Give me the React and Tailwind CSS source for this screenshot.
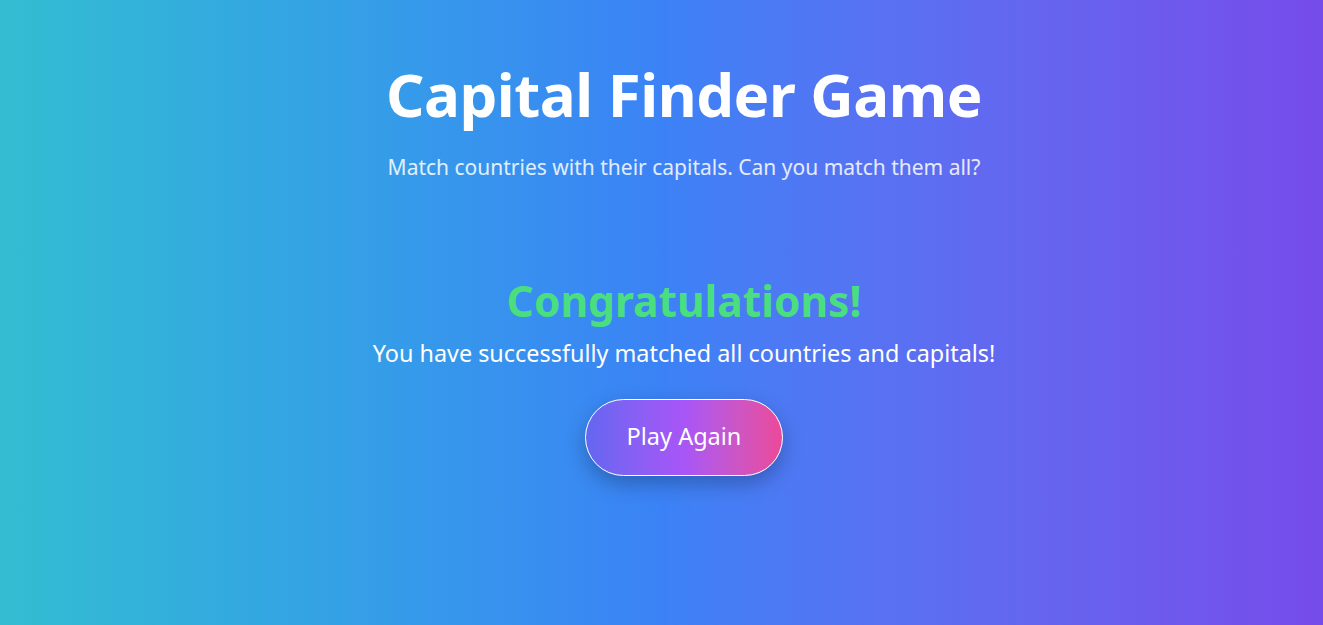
export default function App() {
  return (
    <div
      className="min-h-screen w-full bg-gradient-to-r from-[#33bdd1] via-[#3b82f6] to-[#764bea] pl-[45px] text-center text-white"
      style={{ fontFamily: '"Noto Sans", "Open Sans", sans-serif' }}
    >
      <header className="pt-[58px]">
        <h1 className="text-[60px] font-bold leading-[1.2] tracking-[-0.5px]">
          Capital Finder Game
        </h1>
        <p className="mt-[22px] text-[21px] text-white/85">
          Match countries with their capitals. Can you match them all?
        </p>
      </header>

      {/* Win screen */}
      <section className="mt-[91px] flex flex-col items-center">
        <h2 className="text-[42.5px] font-bold leading-[1.2] text-[#4ade80]">
          Congratulations!
        </h2>
        <p className="mt-[10px] text-[23.4px]">
          You have successfully matched all countries and capitals!
        </p>
        <button className="mt-[28px] h-[77px] w-[198px] rounded-full border border-white bg-gradient-to-r from-[#6366f1] via-[#a855f7] to-[#ec4899] text-[23.5px] text-white shadow-[0_8px_20px_rgba(0,0,0,0.25)]">
          Play Again
        </button>
      </section>
    </div>
  );
}
